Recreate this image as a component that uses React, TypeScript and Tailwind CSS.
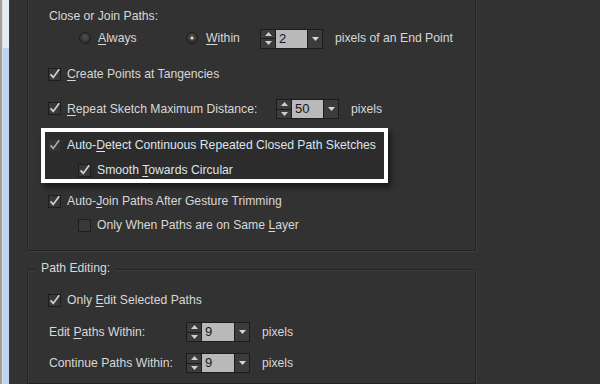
import React from "react";

function Check({ checked = true, dim = false }: { checked?: boolean; dim?: boolean }) {
  return (
    <svg width="13" height="13" viewBox="0 0 13 13" className="shrink-0">
      <rect x="0.5" y="0.5" width="12" height="12" fill={dim ? "#353535" : "#383838"} stroke={dim ? "#2c2c2c" : "#1d1d1d"} />
      {checked && (
        <path d="M2.6 6.4 L5.2 9.4 L11.2 1.2" fill="none" stroke={dim ? "#a8a8a8" : "#d2d2d2"} strokeWidth="1.7" />
      )}
    </svg>
  );
}

function Radio({ selected = false }: { selected?: boolean }) {
  return (
    <svg width="12" height="12" viewBox="0 0 12 12" className="shrink-0">
      <defs>
        <radialGradient id={selected ? "rs" : "ru"} cx="0.5" cy="0.4" r="0.6">
          <stop offset="0" stopColor="#505050" />
          <stop offset="1" stopColor="#2c2c2c" />
        </radialGradient>
      </defs>
      <circle cx="6" cy="6" r="5.4" fill={`url(#${selected ? "rs" : "ru"})`} stroke="#1c1c1c" strokeWidth="1" />
      {selected && <circle cx="6" cy="6" r="1.6" fill="#d8d8d8" />}
    </svg>
  );
}

function Spinner({ value, wide = false }: { value: string; wide?: boolean }) {
  return (
    <div className={`${wide ? "w-[64px]" : "w-[63px]"} h-[20px] flex border border-[#1c1c1c] shrink-0`}>
      <div className="w-[15px] flex flex-col bg-[#3c3c3c] border-r border-[#1c1c1c]">
        <div className="flex-1 flex items-center justify-center border-b border-[#1c1c1c]">
          <svg width="7" height="4" viewBox="0 0 7 4"><path d="M0 4 L3.5 0 L7 4 Z" fill="#cfcfcf" /></svg>
        </div>
        <div className="flex-1 flex items-center justify-center">
          <svg width="7" height="4" viewBox="0 0 7 4"><path d="M0 0 L7 0 L3.5 4 Z" fill="#cfcfcf" /></svg>
        </div>
      </div>
      <div className="flex-1 bg-[#b9b9b9] text-[#15152a] pl-[3px] flex items-center text-[13px]">{value}</div>
      <div className="w-[15px] bg-[#3c3c3c] border-l border-[#1c1c1c] flex items-center justify-center">
        <svg width="7" height="4" viewBox="0 0 7 4"><path d="M0 0 L7 0 L3.5 4 Z" fill="#d8d8d8" /></svg>
      </div>
    </div>
  );
}

function U({ children }: { children: React.ReactNode }) {
  return <span className="underline underline-offset-2 decoration-1">{children}</span>;
}

export default function App() {
  return (
    <div className="flex w-[600px] h-[384px] overflow-hidden bg-[#323232] text-[#d8d8d8] text-[12.2px] font-['Liberation_Sans',Arial,sans-serif]">
      {/* left window strip */}
      <div className="w-[10px] h-full flex shrink-0">
        <div className="w-[2px] bg-[#a0a0a0]" />
        <div className="w-[1px] bg-[#dcdcdc]" />
        <div className="w-[6px] flex flex-col">
          <div className="h-[48px] bg-[#e4ebf4]" />
          <div className="flex-1 bg-[#bcd4ee]" />
        </div>
        <div className="w-[1px] bg-[#3a3a3a]" />
      </div>

      <div className="ml-[17px] w-[449px] flex flex-col shrink-0">
        {/* Panel 1 */}
        <div className="h-[251px] border-x border-b border-[#242424] shadow-[inset_1px_0_0_#3c3c3c,1px_1px_0_#3c3c3c] pl-[20px] flex flex-col">
          <div className="mt-[6px] h-[20px] flex items-center pl-[1px]">Close or Join Paths:</div>

          <div className="mt-[2px] h-[21px] flex items-center">
            <div className="ml-[31px] w-[107px] flex items-center gap-[7px]">
              <Radio />
              <span><U>A</U>lways</span>
            </div>
            <div className="w-[74px] flex items-center gap-[8px]">
              <Radio selected />
              <span><U>W</U>ithin</span>
            </div>
            <Spinner value="2" />
            <span className="ml-[12px]">pixels of an End Point</span>
          </div>

          <div className="mt-[15px] h-[20px] flex items-center gap-[6px]">
            <Check />
            <span><U>C</U>reate Points at Tangencies</span>
          </div>

          <div className="mt-[15px] h-[20px] flex items-center">
            <div className="w-[228px] flex items-center gap-[6px]">
              <Check />
              <span><U>R</U>epeat Sketch Maximum Distance:</span>
            </div>
            <Spinner value="50" />
            <span className="ml-[12px]">pixels</span>
          </div>

          <div className="mt-[9px] -ml-[7px] w-[347px] h-[55px] border-4 border-white bg-[#2c2c2c] shadow-[3px_4px_6px_rgba(0,0,0,0.55)] pl-[3px] flex flex-col">
            <div className="mt-[5px] h-[16px] flex items-center gap-[6px]">
              <Check dim />
              <span className="text-[#dce4ee]">Auto-<U>D</U>etect Continuous Repeated Closed Path Sketches</span>
            </div>
            <div className="mt-[9px] h-[16px] flex items-center gap-[6px] pl-[30px]">
              <Check />
              <span className="text-[#dce4ee]">Smooth <U>T</U>owards Circular</span>
            </div>
          </div>

          <div className="mt-[10px] h-[16px] flex items-center gap-[6px]">
            <Check />
            <span>Auto-<U>J</U>oin Paths After Gesture Trimming</span>
          </div>

          <div className="mt-[8px] h-[16px] flex items-center gap-[6px] pl-[30px]">
            <Check checked={false} />
            <span>Only When Paths are on Same <U>L</U>ayer</span>
          </div>
        </div>

        {/* Panel 2 */}
        <div className="relative mt-[18px] flex-1 border border-[#242424] shadow-[inset_1px_1px_0_#3c3c3c,1px_1px_0_#3c3c3c] pl-[20px] pt-[22px] flex flex-col">
          <div className="absolute top-[-10px] left-[8px] h-[16px] leading-[16px] px-[5px] bg-[#323232]">Path Editing:</div>

          <div className="h-[16px] flex items-center gap-[6px]">
            <Check />
            <span>Only <U>E</U>dit Selected Paths</span>
          </div>

          <div className="mt-[14px] h-[20px] flex items-center">
            <span className="w-[138px] pl-[1px]">Edit <U>P</U>aths Within:</span>
            <Spinner value="9" wide />
            <span className="ml-[12px]">pixels</span>
          </div>

          <div className="mt-[11px] h-[20px] flex items-center">
            <span className="w-[138px] pl-[1px]">Continue Paths Within:</span>
            <Spinner value="9" wide />
            <span className="ml-[12px]">pixels</span>
          </div>
        </div>
      </div>
    </div>
  );
}
